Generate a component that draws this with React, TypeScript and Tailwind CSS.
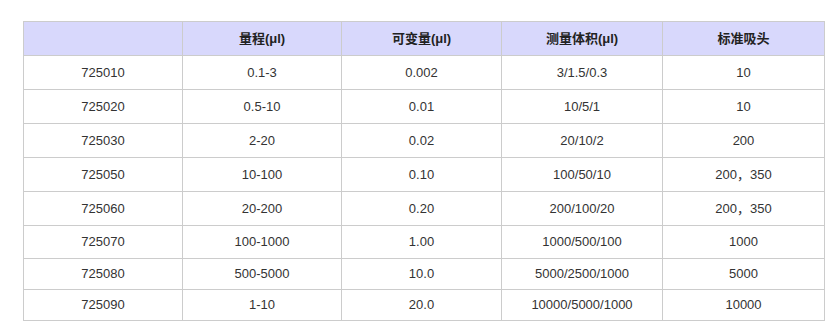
import React from 'react';

const headers = ['', '量程(μl)', '可变量(μl)', '测量体积(μl)', '标准吸头'];

const rows: string[][] = [
    ['725010', '0.1-3', '0.002', '3/1.5/0.3', '10'],
    ['725020', '0.5-10', '0.01', '10/5/1', '10'],
    ['725030', '2-20', '0.02', '20/10/2', '200'],
    ['725050', '10-100', '0.10', '100/50/10', '200，350'],
    ['725060', '20-200', '0.20', '200/100/20', '200，350'],
    ['725070', '100-1000', '1.00', '1000/500/100', '1000'],
    ['725080', '500-5000', '10.0', '5000/2500/1000', '5000'],
    ['725090', '1-10', '20.0', '10000/5000/1000', '10000'],
];

// last rows are a bit shorter in the original
const rowHeights = ['h-[34px]', 'h-[34px]', 'h-[34px]', 'h-[34px]', 'h-[34px]', 'h-[33px]', 'h-[31px]', 'h-[31px]'];

export default function App() {
    return (
        <div className="min-h-[331px] w-[837px] bg-white pl-[23px] pt-[21px] font-['Liberation_Sans','Noto_Sans_CJK_SC',sans-serif]">
            <table className="w-[801px] table-fixed border-collapse text-[13px] text-[#333]">
                <colgroup>
                    <col className="w-[159px]" />
                    <col className="w-[159px]" />
                    <col className="w-[160px]" />
                    <col className="w-[161px]" />
                    <col className="w-[162px]" />
                </colgroup>
                <thead>
                    <tr className="h-[34px] bg-[#d8d8fc]">
                        {headers.map((h, i) => (
                            <th key={i} className="border border-[#cccccc] text-center align-middle font-bold text-[#222]">
                                {h}
                            </th>
                        ))}
                    </tr>
                </thead>
                <tbody>
                    {rows.map((row, r) => (
                        <tr key={r} className={rowHeights[r]}>
                            {row.map((cell, c) => (
                                <td key={c} className="border border-[#cccccc] text-center align-middle">
                                    {cell}
                                </td>
                            ))}
                        </tr>
                    ))}
                </tbody>
            </table>
        </div>
    );
}
